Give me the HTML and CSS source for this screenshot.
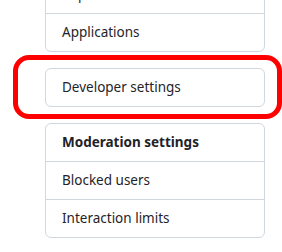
FILE: index.html
```html
<!DOCTYPE html>
<html lang="en">
<head>
  <meta charset="UTF-8" />
  <meta name="viewport" content="width=device-width, initial-scale=1.0" />
  <title>Settings menu</title>
  <link rel="stylesheet" href="styles.css">
</head>
<body>
  <div class="sidebar">
    <div class="menu menu-first">
      <a class="item" href="#">Repositories</a>
      <a class="item" href="#">Applications</a>
    </div>

    <div class="highlight">
      <div class="menu">
        <a class="item" href="#">Developer settings</a>
      </div>
    </div>

    <div class="menu">
      <div class="item heading">Moderation settings</div>
      <a class="item" href="#">Blocked users</a>
      <a class="item" href="#">Interaction limits</a>
    </div>
  </div>
</body>
</html>
```

FILE: styles.css
```css
body {
  margin: 0;
  padding: 0;
  background: #ffffff;
  font-family: 'Noto Sans', sans-serif;
  color: #1f2328;
  overflow: hidden;
}
.sidebar {
  display: flex;
  flex-direction: column;
  margin-top: -25px;
}
.menu {
  width: 218px;
  margin-left: 45px;
  border: 1px solid #d0d7de;
  border-radius: 6px;
  display: flex;
  flex-direction: column;
}
.item {
  display: block;
  padding: 8px 16px;
  line-height: 21px;
  font-size: 13.5px;
  color: #1f2328;
  text-decoration: none;
  border-top: 1px solid #d0d7de;
}
.item:first-child {
  border-top: none;
}
.heading {
  font-weight: bold;
}
.highlight {
  width: 232px;
  margin: 3px 0 4px 13px;
  border: 5px solid #ff0000;
  border-radius: 16px;
  padding: 8px 0 7px 27px;
}
.highlight .menu {
  margin-left: 0;
}
```
